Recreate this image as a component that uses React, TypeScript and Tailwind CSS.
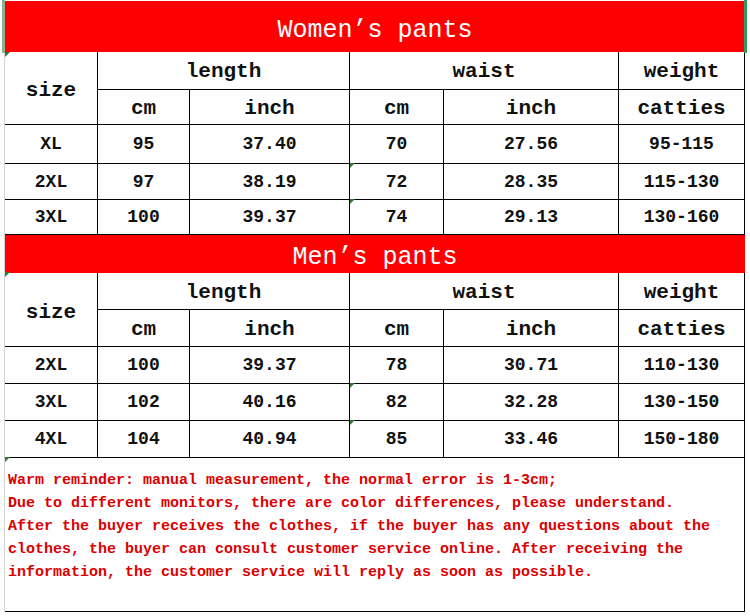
import React from "react";

type Row = [string, string, string, string, string, string];

const cols = "grid grid-cols-[93px_92px_160px_94px_175px_126px]";

const women: Row[] = [
  ["XL", "95", "37.40", "70", "27.56", "95-115"],
  ["2XL", "97", "38.19", "72", "28.35", "115-130"],
  ["3XL", "100", "39.37", "74", "29.13", "130-160"],
];

const men: Row[] = [
  ["2XL", "100", "39.37", "78", "30.71", "110-130"],
  ["3XL", "102", "40.16", "82", "32.28", "130-150"],
  ["4XL", "104", "40.94", "85", "33.46", "150-180"],
];

function Cell({ children, className = "" }: { children?: React.ReactNode; className?: string }) {
  return (
    <div className={`flex items-center justify-center border-r border-b border-black ${className}`}>
      {children}
    </div>
  );
}

function Header({ rows }: { rows: string }) {
  return (
    <div className={`${cols} ${rows} text-[21px] font-bold text-[#111]`}>
      <Cell className="row-span-2 pt-[6px]">size</Cell>
      <Cell className="col-span-2 pt-[3px]">length</Cell>
      <Cell className="col-span-2 pt-[3px]">waist</Cell>
      <Cell className="pt-[3px]">weight</Cell>
      <Cell className="pt-[3px]">cm</Cell>
      <Cell className="pt-[3px]">inch</Cell>
      <Cell className="pt-[3px]">cm</Cell>
      <Cell className="pt-[3px]">inch</Cell>
      <Cell className="pt-[3px]">catties</Cell>
    </div>
  );
}

function DataRow({ row, h }: { row: Row; h: string }) {
  return (
    <div className={`${cols} ${h} text-[18px] font-bold text-[#111]`}>
      {row.map((v, i) => (
        <Cell key={i} className="pt-[1px]">{v}</Cell>
      ))}
    </div>
  );
}

function Tri({ x, y }: { x: number; y: number }) {
  return (
    <div
      className="absolute w-0 h-0 border-t-[5px] border-r-[5px] border-t-[#2f7d32] border-r-transparent"
      style={{ left: x, top: y }}
    />
  );
}

export default function App() {
  return (
    <div className="relative w-[750px] h-[616px] overflow-hidden bg-white font-['Liberation_Mono',monospace]">
      <div className="ml-[4px] w-[741px] border-l border-[#d4d4d4] pt-[1px]">
        {/* women */}
        <div className="h-[51px] bg-[#ff0000] flex items-center justify-center pt-[8px] text-white text-[25px]">
          Women’s pants
        </div>
        <Header rows="grid-rows-[38px_35px]" />
        <DataRow row={women[0]} h="h-[39px]" />
        <DataRow row={women[1]} h="h-[36px]" />
        <DataRow row={women[2]} h="h-[35px]" />

        {/* men */}
        <div className="h-[38px] bg-[#ff0000] flex items-center justify-center pt-[8px] text-white text-[25px]">
          Men’s pants
        </div>
        <Header rows="grid-rows-[37px_37px]" />
        <DataRow row={men[0]} h="h-[37px]" />
        <DataRow row={men[1]} h="h-[37px]" />
        <DataRow row={men[2]} h="h-[37px]" />

        {/* reminder */}
        <div className="h-[154px] border-r border-b border-black pl-[3px] pt-[11px] text-[15px] leading-[23px] font-bold text-[#dc0000] whitespace-nowrap">
          <div>Warm reminder: manual measurement, the normal error is 1-3cm;</div>
          <div>Due to different monitors, there are color differences, please understand.</div>
          <div>After the buyer receives the clothes, if the buyer has any questions about the</div>
          <div>clothes, the buyer can consult customer service online. After receiving the</div>
          <div>information, the customer service will reply as soon as possible.</div>
        </div>
      </div>

      {/* selection border */}
      <div className="absolute left-[2px] top-0 w-[3px] h-[53px] bg-[#86b496]" />
      <div className="absolute left-[744px] top-0 w-[3px] h-[53px] bg-[#2f9a62]" />

      <Tri x={5} y={52} />
      <Tri x={350} y={163} />
      <Tri x={350} y={199} />
      <Tri x={5} y={272} />
      <Tri x={350} y={383} />
      <Tri x={350} y={420} />
      <Tri x={5} y={457} />
    </div>
  );
}
